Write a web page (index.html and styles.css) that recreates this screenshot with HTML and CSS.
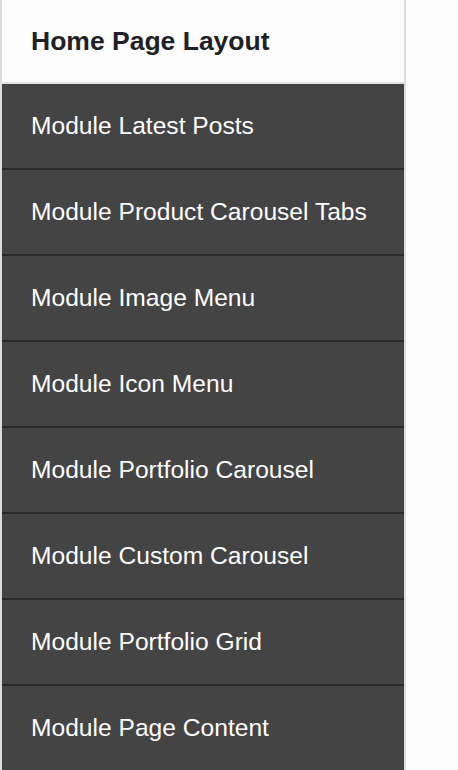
FILE: index.html
```html
<!DOCTYPE html>
<html>
<head>
<meta charset="utf-8">
<link rel="stylesheet" href="styles.css">
</head>
<body>
<nav class="menu">
  <div class="menu-head">Home Page Layout</div>
  <ul class="menu-list">
    <li class="menu-item">Module Latest Posts</li>
    <li class="menu-item">Module Product Carousel Tabs</li>
    <li class="menu-item">Module Image Menu</li>
    <li class="menu-item">Module Icon Menu</li>
    <li class="menu-item">Module Portfolio Carousel</li>
    <li class="menu-item">Module Custom Carousel</li>
    <li class="menu-item">Module Portfolio Grid</li>
    <li class="menu-item">Module Page Content</li>
  </ul>
</nav>
</body>
</html>
```
FILE: styles.css
```css
html, body {
  margin: 0;
  padding: 0;
  background: #fcfcfc;
  height: 100%;
}
body {
  font-family: "Liberation Sans", Arial, sans-serif;
}
.menu {
  width: 402px;
  border-left: 2px solid #dedede;
  border-right: 2px solid #dedede;
  background: #444444;
  min-height: 770px;
}
.menu-head {
  height: 82px;
  border-bottom: 2px solid #e2e2e2;
  background: #fdfdfd;
  color: #1e2126;
  font-weight: bold;
  font-size: 26.5px;
  line-height: 82px;
  padding-left: 29px;
}
.menu-list {
  list-style: none;
  margin: 0;
  padding: 0;
}
.menu-item {
  height: 84px;
  line-height: 84px;
  border-bottom: 2px solid #2a2a2a;
  color: #ffffff;
  font-size: 24.6px;
  padding-left: 29px;
}
```
